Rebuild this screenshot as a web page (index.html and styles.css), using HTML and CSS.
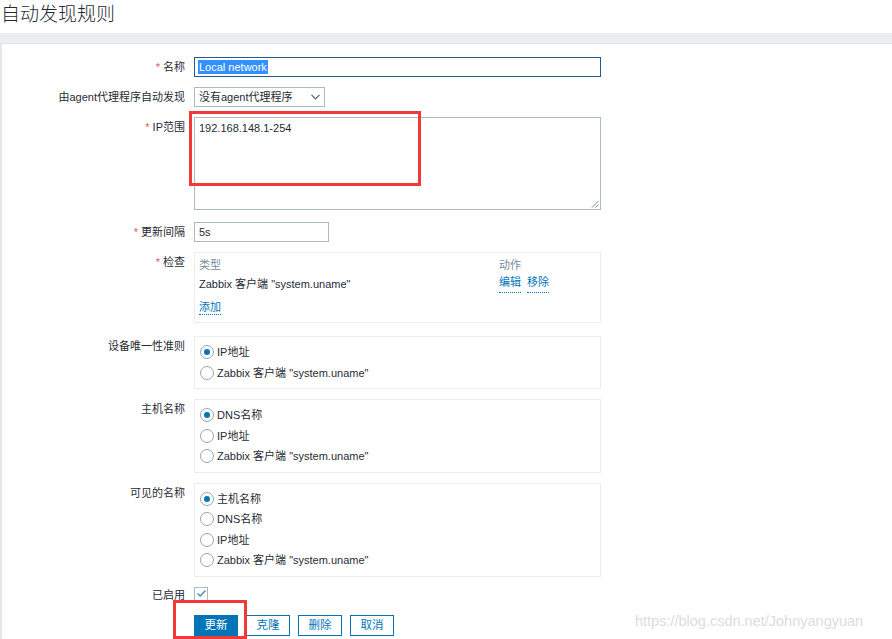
FILE: index.html
```html
<!DOCTYPE html>
<html lang="zh">
<head>
<meta charset="utf-8">
<title>自动发现规则</title>
<link rel="stylesheet" href="styles.css">
</head>
<body>
<div class="page">
  <h1 class="title">自动发现规则</h1>
  <div class="bar"></div>
  <div class="content">
    <div class="form">
      <div class="lbl"><span class="req">*</span> 名称</div>
      <div class="ctl"><div class="input focus w406"><span class="sel">Local network</span></div></div>

      <div class="lbl">由agent代理程序自动发现</div>
      <div class="ctl"><div class="input select w130">没有agent代理程序<svg class="chev" width="9" height="6" viewBox="0 0 9 6"><path d="M0.5 0.8 L4.5 4.8 L8.5 0.8" fill="none" stroke="#55616a" stroke-width="1.2"/></svg></div></div>

      <div class="lbl"><span class="req">*</span> IP范围</div>
      <div class="ctl mb2"><div class="textarea">192.168.148.1-254<svg class="grip" width="8" height="8" viewBox="0 0 8 8"><path d="M7.5 1 L1 7.5 M7.5 4.5 L4.5 7.5" stroke="#7b858c" stroke-width="1"/></svg></div></div>

      <div class="lbl"><span class="req">*</span> 更新间隔</div>
      <div class="ctl"><div class="input w134">5s</div></div>

      <div class="lbl"><span class="req">*</span> 检查</div>
      <div class="ctl mb3">
        <div class="box checks">
          <div class="crow head"><span class="c1">类型</span><span class="c2">动作</span></div>
          <div class="crow"><span class="c1">Zabbix 客户端 "system.uname"</span><span class="c2"><a class="lnk">编辑</a><a class="lnk">移除</a></span></div>
          <div class="crow add"><a class="lnk">添加</a></div>
        </div>
      </div>

      <div class="lbl">设备唯一性准则</div>
      <div class="ctl">
        <div class="box radios">
          <div class="radio on"><span class="rb"></span>IP地址</div>
          <div class="radio"><span class="rb"></span>Zabbix 客户端 "system.uname"</div>
        </div>
      </div>

      <div class="lbl">主机名称</div>
      <div class="ctl">
        <div class="box radios">
          <div class="radio on"><span class="rb"></span>DNS名称</div>
          <div class="radio"><span class="rb"></span>IP地址</div>
          <div class="radio"><span class="rb"></span>Zabbix 客户端 "system.uname"</div>
        </div>
      </div>

      <div class="lbl">可见的名称</div>
      <div class="ctl">
        <div class="box radios">
          <div class="radio on"><span class="rb"></span>主机名称</div>
          <div class="radio"><span class="rb"></span>DNS名称</div>
          <div class="radio"><span class="rb"></span>IP地址</div>
          <div class="radio"><span class="rb"></span>Zabbix 客户端 "system.uname"</div>
        </div>
      </div>

      <div class="lbl lbl-chk">已启用</div>
      <div class="ctl"><span class="chk"><svg width="11" height="9" viewBox="0 0 11 9"><path d="M1.5 4.5 L4.2 7 L9.5 1.5" fill="none" stroke="#3a8cc8" stroke-width="1.3"/></svg></span></div>

      <div class="lbl"></div>
      <div class="ctl buttons">
        <span class="btn primary">更新</span>
        <span class="btn">克隆</span>
        <span class="btn">删除</span>
        <span class="btn">取消</span>
      </div>
    </div>
  </div>
  <div class="mark mark1"></div>
  <div class="mark mark2"></div>
  <div class="watermark">https://blog.csdn.net/Johnyangyuan</div>
</div>
</body>
</html>
```
FILE: styles.css
```css
html, body {
  margin: 0;
  padding: 0;
  background: #ffffff;
}
.page {
  position: relative;
  width: 892px;
  height: 639px;
  overflow: hidden;
  font-family: "Liberation Sans", Arial, "Noto Sans CJK SC", sans-serif;
  font-size: 11px;
  color: #1f2c33;
}
.title {
  margin: 0;
  height: 33px;
  padding-left: 1px;
  font-family: "Noto Sans CJK SC", sans-serif;
  font-weight: 300;
  font-size: 19px;
  line-height: 25px;
  color: #1f2c33;
}
.bar {
  height: 10px;
  background: #ebeef0;
  border-bottom: 1px solid #dfe4e7;
}
.content {
  border-left: 2px solid #e3e7ea;
  height: 600px;
  padding-top: 13px;
  box-sizing: border-box;
}
.form {
  display: grid;
  grid-template-columns: 183px 420px;
  column-gap: 9px;
  row-gap: 10px;
}
.lbl {
  text-align: right;
  line-height: 20px;
  height: 20px;
  white-space: nowrap;
}
.req {
  color: #e45959;
}
.ctl {
  display: flex;
  align-items: flex-start;
}
.mb2 {
  margin-bottom: 2px;
}
.mb3 {
  margin-bottom: 3px;
}
.input {
  box-sizing: border-box;
  height: 20px;
  border: 1px solid #acbbc2;
  padding: 0 4px;
  line-height: 18px;
  background: #fff;
  white-space: nowrap;
}
.w406 { width: 407px; }
.w130 { width: 131px; }
.w134 { width: 135px; }
.focus {
  border-color: #1f5d93;
}
.sel {
  background: #3390ff;
  color: #fff;
  display: inline-block;
  line-height: 14px;
  padding: 0 1px;
  margin-left: -1px;
}
.select {
  display: flex;
  align-items: center;
  justify-content: space-between;
}
.textarea {
  position: relative;
  box-sizing: border-box;
  width: 407px;
  height: 93px;
  border: 1px solid #acbbc2;
  padding: 2px 4px;
  line-height: 16px;
}
.grip {
  position: absolute;
  right: 1px;
  bottom: 1px;
}
.box {
  box-sizing: border-box;
  width: 407px;
  border: 1px solid #ebeef0;
}
.checks {
  height: 71px;
  padding: 3px 4px 0;
}
.crow {
  display: flex;
  line-height: 18px;
}
.crow.head {
  color: #768d99;
}
.crow + .crow {
  margin-top: 1px;
}
.crow.add {
  margin-top: 7px;
}
.c1 {
  width: 300px;
}
.c2 {
  display: flex;
  gap: 6px;
}
.lnk {
  color: #0275b8;
  border-bottom: 1px dotted #0275b8;
  line-height: 14px;
  display: inline-block;
}
.radios {
  padding: 5px 5px;
}
.radio {
  display: flex;
  align-items: center;
  height: 20.5px;
  line-height: 20px;
  white-space: nowrap;
}
.rb {
  box-sizing: border-box;
  width: 14px;
  height: 14px;
  border: 1px solid #9aa5ab;
  border-radius: 50%;
  margin-right: 3px;
  background: #fff;
  position: relative;
}
.radio.on .rb::after {
  content: "";
  position: absolute;
  left: 3px;
  top: 3px;
  width: 6px;
  height: 6px;
  border-radius: 50%;
  background: #0275b8;
}
.lbl-chk {
  height: 14px;
  line-height: 16px;
}
.chk {
  box-sizing: border-box;
  width: 14px;
  height: 14px;
  border: 1px solid #acbbc2;
  display: flex;
  align-items: center;
  justify-content: center;
}
.buttons {
  gap: 8px;
  margin-top: 4px;
}
.btn {
  box-sizing: border-box;
  height: 21px;
  width: 44px;
  border: 1px solid #0275b8;
  color: #0275b8;
  text-align: center;
  line-height: 19px;
  font-size: 11.5px;
  background: #fff;
}
.btn.primary {
  background: #0275b8;
  color: #fff;
}
.mark {
  position: absolute;
  border: 3px solid #f03a3a;
  box-sizing: border-box;
}
.mark1 {
  left: 189px;
  top: 111px;
  width: 232px;
  height: 75px;
}
.mark2 {
  left: 173px;
  top: 600px;
  width: 74px;
  height: 39px;
}
.watermark {
  position: absolute;
  left: 635px;
  top: 613px;
  font-family: "Liberation Sans", Arial, sans-serif;
  font-size: 14.5px;
  color: #dcdcdc;
  white-space: nowrap;
}
```
